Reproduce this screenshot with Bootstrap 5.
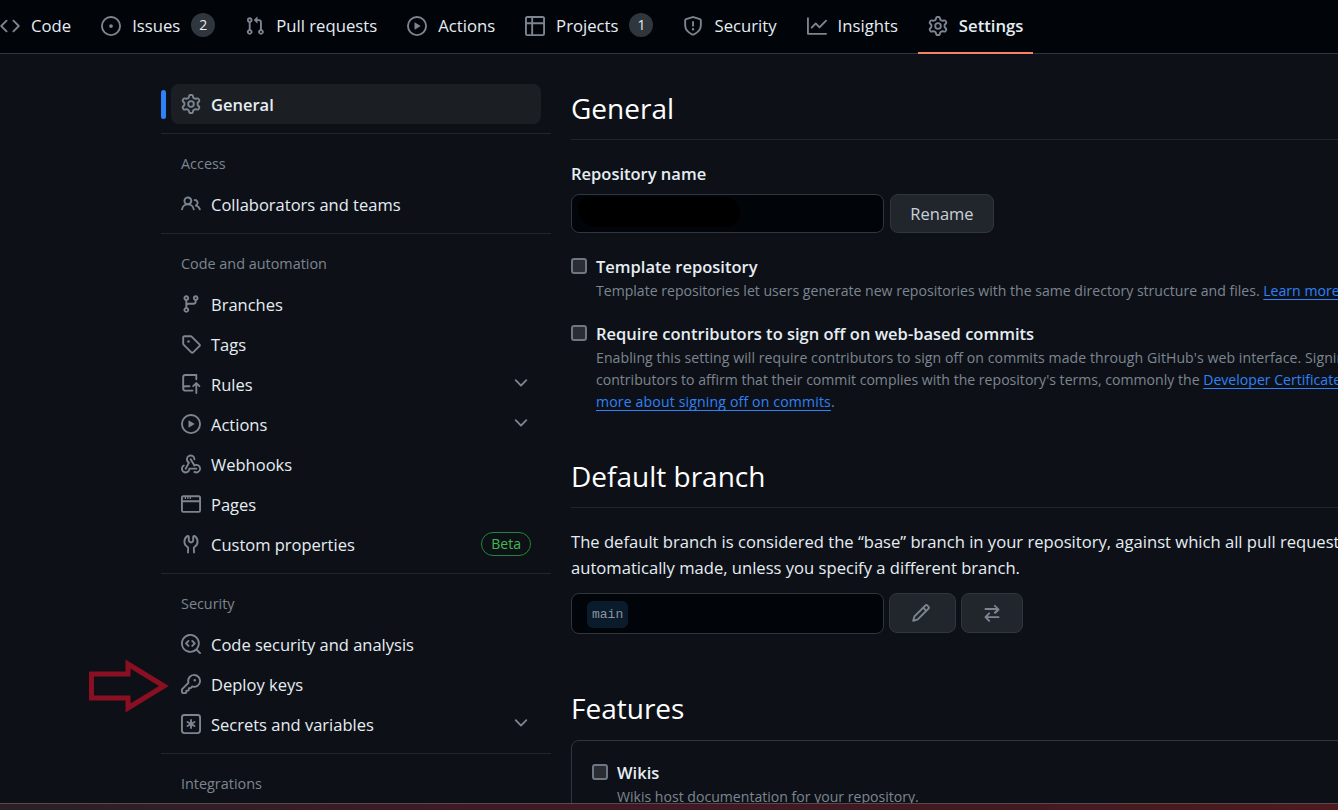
<!doctype html>
<html lang="en" data-bs-theme="dark">
<head>
<meta charset="utf-8">
<title>Settings</title>
<link rel="stylesheet" href="https://cdn.jsdelivr.net/npm/bootstrap@5.3.0/dist/css/bootstrap.min.css">
<style>
html,body{height:810px;overflow:hidden}
body{background:#0d1117;color:#e6edf3;font-family:"Open Sans","Noto Sans",sans-serif;font-size:16.5px;line-height:22px;position:relative}
svg.oct{width:20px;height:20px;fill:#7d8590;flex:none}
.topnav{height:54px;background:#010409;border-bottom:1px solid #30363d;gap:10px}
.tab{height:53px;padding:0 10px 2px;gap:11px;color:#e6edf3;position:relative;font-size:16.7px}
.tab:first-child{margin-left:-10px}
.tab.on{font-weight:600}
.tab.on::after{content:"";position:absolute;left:0;right:0;bottom:-1px;height:2px;background:#f78166}
.cnt{width:24px;height:24px;border-radius:50%;background:#30363d;font-size:14px;margin-bottom:1px}
.shell{padding-left:161px;padding-top:30px;gap:20px}
.side{width:390px;flex:none}
.sitem{height:40px;margin:0 10px;padding:0 10px;gap:10px;border-radius:8px;color:#e6edf3}
.sitem svg.oct{margin-bottom:2px}
.sitem.on{background:#1b1f24;font-weight:600;position:relative;padding-top:2px}
.sitem.on::before{content:"";position:absolute;left:-10px;top:6px;width:5px;height:29px;border-radius:4px;background:#2f81f7}
.sitem svg.chev{margin-left:auto;margin-bottom:4px}
.shead{font-size:14.4px;color:#7d8590;height:20px;line-height:20px;margin:20px 20px 11px}
.sdiv{height:1px;background:#21262d;margin:8px 0 0;opacity:1;border:0}
.sitem.on + .sdiv{margin-top:9px}
.pill{margin-left:auto;margin-bottom:2px;border:1px solid #238636;color:#3fb950;border-radius:12px;font-size:14px;height:24px;padding:0 9px}
.mainc{width:1000px;flex:none}
.sect{font-size:28px;font-weight:400;line-height:48px;margin:0;padding-bottom:7px;border-bottom:1px solid #21262d}
.flabel{font-weight:600;margin:23px 0 9px}
.inp{width:313px;height:39px;background:#010409;border:1px solid #30363d;border-radius:8px;padding:0 6px}
.blob{width:162px;height:30px;margin-top:-3px;background:#000;border-radius:15px 20px 18px 24px}
.gbtn{background:#21262d;border:1px solid #30363d;border-radius:8px;color:#c9d1d9;font-size:16.5px;padding:0;height:39px}
.gbtn:hover{background:#21262d}
.namerow{gap:6px;margin-bottom:23px}
.rename-btn{width:104px;padding-top:1px}
.ck{width:16px;height:16px;flex:none;background:#2a2d33;border:2px solid #6e7681;border-radius:3px;margin-top:2px}
.ckrow{gap:9px}
.ckt{font-weight:600;margin-bottom:2px}
.nt{font-size:14.08px;color:#7d8590;line-height:22px;white-space:nowrap}
.wide1{letter-spacing:.07px}
.wide2{letter-spacing:.15px}
.sp1{margin-bottom:21px}
a.lk{color:#2f81f7;text-decoration:underline;text-underline-offset:3px}
.default-h{margin-top:39px}
.para{line-height:26px;margin:21px 0 12px;white-space:nowrap;font-size:16.6px}
.branch-row{gap:5px;align-items:flex-start}
.inp2{height:41px;padding-left:15px}
.mono{font-family:"Liberation Mono",monospace;font-size:13px;color:#8b949e;background:#0a1b2c;border-radius:6px;padding:3px 5px;line-height:21px;margin-top:1px}
.ibtn1{width:67px;height:40px}
.ibtn1 svg.oct{margin-right:4px}
.ibtn2{width:62px;height:40px}
.feat-h{margin-top:50px;border-bottom:0;padding-bottom:0}
.fbox{border:1px solid #30363d;border-radius:8px;padding:21px 20px;margin-top:8px}
.strip{position:absolute;left:0;right:0;top:803px;height:7px;background:linear-gradient(90deg,#2a2026,#3f1a26 35%,#3f1a22 65%,#4d1a1e);border-top:1px solid #57484c}
.arrow{position:absolute;left:86px;top:658px;width:86px;height:58px;fill:none;stroke:#8a0f22;stroke-width:5}
</style>
</head>
<body>
<svg width="0" height="0" class="position-absolute"><defs>
<symbol id="i-code" viewBox="0 0 16 16"><path d="m11.28 3.22 4.25 4.25a.75.75 0 0 1 0 1.06l-4.25 4.25a.749.749 0 0 1-1.275-.326.749.749 0 0 1 .215-.734L13.94 8l-3.72-3.72a.749.749 0 0 1 .326-1.275.749.749 0 0 1 .734.215Zm-6.56 0a.751.751 0 0 1 1.042.018.751.751 0 0 1 .018 1.042L2.06 8l3.72 3.72a.749.749 0 0 1-.326 1.275.749.749 0 0 1-.734-.215L.47 8.53a.75.75 0 0 1 0-1.06Z"/></symbol>
<symbol id="i-issue" viewBox="0 0 16 16"><path d="M8 9.5a1.5 1.5 0 1 0 0-3 1.5 1.5 0 0 0 0 3Z"/><path d="M8 0a8 8 0 1 1 0 16A8 8 0 0 1 8 0ZM1.5 8a6.5 6.5 0 1 0 13 0 6.5 6.5 0 0 0-13 0Z"/></symbol>
<symbol id="i-pr" viewBox="0 0 16 16"><path d="M1.5 3.25a2.25 2.25 0 1 1 3 2.122v5.256a2.251 2.251 0 1 1-1.5 0V5.372A2.25 2.25 0 0 1 1.5 3.25Zm5.677-.177L9.573.677A.25.25 0 0 1 10 .854V2.5h1A2.5 2.5 0 0 1 13.5 5v5.628a2.251 2.251 0 1 1-1.5 0V5a1 1 0 0 0-1-1h-1v1.646a.25.25 0 0 1-.427.177L7.177 3.427a.25.25 0 0 1 0-.354ZM3.75 2.5a.75.75 0 1 0 0 1.5.75.75 0 0 0 0-1.5Zm0 9.5a.75.75 0 1 0 0 1.5.75.75 0 0 0 0-1.5Zm8.25.75a.75.75 0 1 0 1.5 0 .75.75 0 0 0-1.5 0Z"/></symbol>
<symbol id="i-play" viewBox="0 0 16 16"><path d="M8 0a8 8 0 1 1 0 16A8 8 0 0 1 8 0ZM1.5 8a6.5 6.5 0 1 0 13 0 6.5 6.5 0 0 0-13 0Zm4.879-2.773 4.264 2.559a.25.25 0 0 1 0 .428l-4.264 2.559A.25.25 0 0 1 6 10.559V5.442a.25.25 0 0 1 .379-.215Z"/></symbol>
<symbol id="i-table" viewBox="0 0 16 16"><path d="M0 1.75C0 .784.784 0 1.75 0h12.5C15.216 0 16 .784 16 1.75v12.5A1.75 1.75 0 0 1 14.25 16H1.75A1.75 1.75 0 0 1 0 14.25ZM6.5 6.5v8h7.75a.25.25 0 0 0 .25-.25V6.5Zm8-1.5V1.75a.25.25 0 0 0-.25-.25H6.5V5Zm-13 1.5v7.75c0 .138.112.25.25.25H5v-8ZM5 5V1.5H1.75a.25.25 0 0 0-.25.25V5Z"/></symbol>
<symbol id="i-shield" viewBox="0 0 16 16"><path d="M7.467.133a1.748 1.748 0 0 1 1.066 0l5.25 1.68A1.75 1.75 0 0 1 15 3.48V7c0 1.566-.32 3.182-1.303 4.682-.983 1.498-2.585 2.813-5.032 3.855a1.697 1.697 0 0 1-1.33 0c-2.447-1.042-4.049-2.357-5.032-3.855C1.32 10.182 1 8.566 1 7V3.48a1.75 1.75 0 0 1 1.217-1.667Zm.61 1.429a.25.25 0 0 0-.153 0l-5.25 1.68a.25.25 0 0 0-.174.238V7c0 1.358.275 2.666 1.057 3.86.784 1.194 2.121 2.34 4.366 3.297a.196.196 0 0 0 .154 0c2.245-.956 3.582-2.104 4.366-3.298C13.225 9.666 13.5 8.36 13.5 7V3.48a.251.251 0 0 0-.174-.237l-5.25-1.68ZM8.75 4.75v3a.75.75 0 0 1-1.5 0v-3a.75.75 0 0 1 1.5 0ZM9 10.5a1 1 0 1 1-2 0 1 1 0 0 1 2 0Z"/></symbol>
<symbol id="i-graph" viewBox="0 0 16 16"><path d="M1.5 1.75V13.5h13.75a.75.75 0 0 1 0 1.5H.75a.75.75 0 0 1-.75-.75V1.75a.75.75 0 0 1 1.5 0Zm14.28 2.53-5.25 5.25a.75.75 0 0 1-1.06 0L7 7.06 4.28 9.78a.751.751 0 0 1-1.042-.018.751.751 0 0 1-.018-1.042l3.25-3.25a.75.75 0 0 1 1.06 0L10 7.94l4.72-4.72a.751.751 0 0 1 1.042.018.751.751 0 0 1 .018 1.042Z"/></symbol>
<symbol id="i-gear" viewBox="0 0 16 16"><path d="M8 0a8.2 8.2 0 0 1 .701.031C9.444.095 9.99.645 10.16 1.29l.288 1.107c.018.066.079.158.212.224.231.114.454.243.668.386.123.082.233.09.299.071l1.103-.303c.644-.176 1.392.021 1.82.63.27.385.506.792.704 1.218.315.675.111 1.422-.364 1.891l-.814.806c-.049.048-.098.147-.088.294.016.257.016.515 0 .772-.01.147.038.246.088.294l.814.806c.475.469.679 1.216.364 1.891a7.977 7.977 0 0 1-.704 1.217c-.428.61-1.176.807-1.82.63l-1.102-.302c-.067-.019-.177-.011-.3.071a5.909 5.909 0 0 1-.668.386c-.133.066-.194.158-.211.224l-.29 1.106c-.168.646-.715 1.196-1.458 1.26a8.006 8.006 0 0 1-1.402 0c-.743-.064-1.289-.614-1.458-1.26l-.289-1.106c-.018-.066-.079-.158-.212-.224a5.738 5.738 0 0 1-.668-.386c-.123-.082-.233-.09-.299-.071l-1.103.303c-.644.176-1.392-.021-1.82-.63a8.12 8.12 0 0 1-.704-1.218c-.315-.675-.111-1.422.363-1.891l.815-.806c.05-.048.098-.147.088-.294a6.214 6.214 0 0 1 0-.772c.01-.147-.038-.246-.088-.294l-.815-.806C.635 6.045.431 5.298.746 4.623a7.92 7.92 0 0 1 .704-1.217c.428-.61 1.176-.807 1.82-.63l1.102.302c.067.019.177.011.3-.071.214-.143.437-.272.668-.386.133-.066.194-.158.211-.224l.29-1.106C6.009.645 6.556.095 7.299.03 7.53.01 7.764 0 8 0Zm-.571 1.525c-.036.003-.108.036-.137.146l-.289 1.105c-.147.561-.549.967-.998 1.189-.173.086-.34.183-.5.29-.417.278-.97.423-1.529.27l-1.103-.303c-.109-.03-.175.016-.195.045-.22.312-.412.644-.573.99-.014.031-.021.11.059.19l.815.806c.411.406.562.957.53 1.456a4.709 4.709 0 0 0 0 .582c.032.499-.119 1.05-.53 1.456l-.815.806c-.081.08-.073.159-.059.19.162.346.353.677.573.989.02.03.085.076.195.046l1.102-.303c.56-.153 1.113-.008 1.53.27.161.107.328.204.501.29.447.222.85.629.997 1.189l.289 1.105c.029.109.101.143.137.146a6.6 6.6 0 0 0 1.142 0c.036-.003.108-.036.137-.146l.289-1.105c.147-.561.549-.967.998-1.189.173-.086.34-.183.5-.29.417-.278.97-.423 1.529-.27l1.103.303c.109.029.175-.016.195-.045.22-.313.411-.644.573-.99.014-.031.021-.11-.059-.19l-.815-.806c-.411-.406-.562-.957-.53-1.456a4.709 4.709 0 0 0 0-.582c-.032-.499.119-1.05.53-1.456l.815-.806c.081-.08.073-.159.059-.19a6.464 6.464 0 0 0-.573-.989c-.02-.03-.085-.076-.195-.046l-1.102.303c-.56.153-1.113.008-1.53-.27a4.44 4.44 0 0 0-.501-.29c-.447-.222-.85-.629-.997-1.189l-.289-1.105c-.029-.11-.101-.143-.137-.146a6.6 6.6 0 0 0-1.142 0ZM11 8a3 3 0 1 1-6 0 3 3 0 0 1 6 0ZM9.5 8a1.5 1.5 0 1 0-3.001.001A1.5 1.5 0 0 0 9.5 8Z"/></symbol>
<symbol id="i-people" viewBox="0 0 16 16"><path d="M2 5.5a3.5 3.5 0 1 1 5.898 2.549 5.508 5.508 0 0 1 3.034 4.084.75.75 0 1 1-1.482.235 4 4 0 0 0-7.9 0 .75.75 0 0 1-1.482-.236A5.507 5.507 0 0 1 3.102 8.05 3.493 3.493 0 0 1 2 5.5ZM11 4a3.001 3.001 0 0 1 2.22 5.018 5.01 5.01 0 0 1 2.56 3.012.749.749 0 0 1-.885.954.752.752 0 0 1-.549-.514 3.507 3.507 0 0 0-2.522-2.372.75.75 0 0 1-.574-.73v-.352a.75.75 0 0 1 .416-.672A1.5 1.5 0 0 0 11 5.5.75.75 0 0 1 11 4Zm-5.5-.5a2 2 0 1 0-.001 3.999A2 2 0 0 0 5.5 3.5Z"/></symbol>
<symbol id="i-branch" viewBox="0 0 16 16"><path d="M9.5 3.25a2.25 2.25 0 1 1 3 2.122V6A2.5 2.5 0 0 1 10 8.5H6a1 1 0 0 0-1 1v1.128a2.251 2.251 0 1 1-1.5 0V5.372a2.25 2.25 0 1 1 1.5 0v1.836A2.493 2.493 0 0 1 6 7h4a1 1 0 0 0 1-1v-.628A2.25 2.25 0 0 1 9.5 3.25Zm-6 0a.75.75 0 1 0 1.5 0 .75.75 0 0 0-1.5 0Zm8.25-.75a.75.75 0 1 0 0 1.5.75.75 0 0 0 0-1.5ZM4.25 12a.75.75 0 1 0 0 1.5.75.75 0 0 0 0-1.5Z"/></symbol>
<symbol id="i-tag" viewBox="0 0 16 16"><path d="M1 7.775V2.75C1 1.784 1.784 1 2.75 1h5.025c.464 0 .91.184 1.238.513l6.25 6.25a1.75 1.75 0 0 1 0 2.474l-5.026 5.026a1.75 1.75 0 0 1-2.474 0l-6.25-6.25A1.752 1.752 0 0 1 1 7.775Zm1.5 0c0 .066.026.13.073.177l6.25 6.25a.25.25 0 0 0 .354 0l5.025-5.025a.25.25 0 0 0 0-.354l-6.25-6.25a.25.25 0 0 0-.177-.073H2.75a.25.25 0 0 0-.25.25ZM6 5a1 1 0 1 1 0 2 1 1 0 0 1 0-2Z"/></symbol>
<symbol id="i-push" viewBox="0 0 16 16"><path d="M1 2.5A2.5 2.5 0 0 1 3.5 0h8.75a.75.75 0 0 1 .75.75v3.5a.75.75 0 0 1-1.5 0V1.5h-8a1 1 0 0 0-1 1v6.708A2.493 2.493 0 0 1 3.5 9h3.25a.75.75 0 0 1 0 1.5H3.5a1 1 0 0 0 0 2h5.75a.75.75 0 0 1 0 1.5H3.5A2.5 2.5 0 0 1 1 11.5Zm13.23 7.79h-.001l-1.224-1.224v6.184a.75.75 0 0 1-1.5 0V9.066L10.28 10.29a.75.75 0 0 1-1.06-1.061l2.505-2.504a.75.75 0 0 1 1.06 0L15.29 9.23a.751.751 0 0 1-.018 1.042.751.751 0 0 1-1.042.018Z"/></symbol>
<symbol id="i-hook" viewBox="0 0 16 16"><path d="M5.5 4.25a2.25 2.25 0 0 1 4.5 0 .75.75 0 0 0 1.5 0 3.75 3.75 0 1 0-6.14 2.889l-2.272 4.258a.75.75 0 0 0 1.324.706L7 7.25a.75.75 0 0 0-.309-1.015A2.25 2.25 0 0 1 5.5 4.25Z"/><path d="M7.364 3.607a.75.75 0 0 1 1.03.257l2.608 4.349a3.75 3.75 0 1 1-.628 6.785.75.75 0 0 1 .752-1.299 2.25 2.25 0 1 0-.033-3.88.75.75 0 0 1-1.03-.256L7.107 4.636a.75.75 0 0 1 .257-1.03Z"/><path d="M2.9 8.776A.75.75 0 0 1 2.625 9.8 2.25 2.25 0 1 0 6 11.75a.75.75 0 0 1 .75-.751h5.5a.75.75 0 0 1 0 1.5H7.425a3.751 3.751 0 1 1-5.55-3.998.75.75 0 0 1 1.024.274Z"/></symbol>
<symbol id="i-browser" viewBox="0 0 16 16"><path d="M0 2.75C0 1.784.784 1 1.75 1h12.5c.966 0 1.75.784 1.75 1.75v10.5A1.75 1.75 0 0 1 14.25 15H1.75A1.75 1.75 0 0 1 0 13.25ZM14.5 6.5h-13v6.75c0 .138.112.25.25.25h12.5a.25.25 0 0 0 .25-.25Zm-13-1.5h13V2.75a.25.25 0 0 0-.25-.25H1.75a.25.25 0 0 0-.25.25ZM5 2.5h1V4H5Zm-2 0h1V4H3Zm4 0h1V4H7Z"/></symbol>
<symbol id="i-tools" viewBox="0 0 16 16"><path d="M5.433 2.304A4.494 4.494 0 0 0 3.5 6c0 1.598.832 3.002 2.09 3.802.518.328.929.923.902 1.64v.008l-.164 3.337a.75.75 0 1 1-1.498-.073l.163-3.33c.002-.085-.05-.216-.207-.316A5.996 5.996 0 0 1 2 6a5.994 5.994 0 0 1 2.567-4.92 1.482 1.482 0 0 1 1.673-.04c.462.296.76.827.76 1.423v2.82c0 .082.041.16.11.206l.75.51a.25.25 0 0 0 .28 0l.75-.51A.249.249 0 0 0 9 5.282V2.463c0-.596.298-1.127.76-1.423a1.482 1.482 0 0 1 1.673.04A5.994 5.994 0 0 1 14 6a5.996 5.996 0 0 1-2.786 5.068c-.157.1-.209.23-.207.315l.163 3.33a.752.752 0 0 1-1.094.714.75.75 0 0 1-.404-.64l-.164-3.345c-.027-.717.384-1.312.902-1.64A4.496 4.496 0 0 0 12.5 6a4.494 4.494 0 0 0-1.933-3.696c-.024.017-.067.067-.067.16v2.818a1.75 1.75 0 0 1-.767 1.448l-.75.51a1.75 1.75 0 0 1-1.966 0l-.75-.51A1.75 1.75 0 0 1 5.5 5.282V2.463c0-.092-.043-.142-.067-.159Z"/></symbol>
<symbol id="i-scan" viewBox="0 0 16 16"><path d="M8.47 4.97a.75.75 0 0 0 0 1.06L9.94 7.5 8.47 8.97a.75.75 0 1 0 1.06 1.06l2-2a.75.75 0 0 0 0-1.06l-2-2a.75.75 0 0 0-1.06 0ZM6.53 6.03a.75.75 0 0 0-1.06-1.06l-2 2a.75.75 0 0 0 0 1.06l2 2a.75.75 0 1 0 1.06-1.06L5.06 7.5l1.47-1.47Z"/><path d="M12.246 13.307a7.501 7.501 0 1 1 1.06-1.06l2.474 2.473a.749.749 0 0 1-.326 1.275.749.749 0 0 1-.734-.215ZM1.5 7.5a6.002 6.002 0 0 0 3.608 5.504 6.002 6.002 0 0 0 6.486-1.117.748.748 0 0 1 .292-.293A6 6 0 1 0 1.5 7.5Z"/></symbol>
<symbol id="i-key" viewBox="0 0 16 16"><path d="M10.5 0a5.499 5.499 0 1 1-1.288 10.848l-.932.932a.749.749 0 0 1-.53.22H7v.75a.749.749 0 0 1-.22.53l-.5.5a.749.749 0 0 1-.53.22H5v.75a.749.749 0 0 1-.22.53l-.5.5a.749.749 0 0 1-.53.22h-2A1.75 1.75 0 0 1 0 14.25v-2c0-.199.079-.389.22-.53l4.932-4.932A5.5 5.5 0 0 1 10.5 0Zm-4 5.5c-.001.431.069.86.205 1.269a.75.75 0 0 1-.181.768L1.5 12.56v1.69c0 .138.112.25.25.25h1.69l.06-.06v-1.19a.75.75 0 0 1 .75-.75h1.19l.06-.06v-1.19a.75.75 0 0 1 .75-.75h1.19l1.023-1.025a.75.75 0 0 1 .768-.18A4 4 0 1 0 6.5 5.5ZM11 6a1 1 0 1 1 0-2 1 1 0 0 1 0 2Z"/></symbol>
<symbol id="i-ast" viewBox="0 0 16 16"><path d="M0 2.75A2.75 2.75 0 0 1 2.75 0h10.5A2.75 2.75 0 0 1 16 2.75v10.5A2.75 2.75 0 0 1 13.25 16H2.75A2.75 2.75 0 0 1 0 13.25ZM2.75 1.5c-.69 0-1.25.56-1.25 1.25v10.5c0 .69.56 1.25 1.25 1.25h10.5c.69 0 1.25-.56 1.25-1.25V2.75c0-.69-.56-1.25-1.25-1.25Z"/><path d="M8 4a.75.75 0 0 1 .75.75V6.7l1.69-.975a.75.75 0 0 1 .75 1.3L9.5 8l1.69.976a.75.75 0 0 1-.75 1.298L8.75 9.3v1.951a.75.75 0 0 1-1.5 0V9.299l-1.69.976a.75.75 0 0 1-.75-1.3L6.5 8l-1.69-.975a.75.75 0 0 1 .75-1.3l1.69.976V4.75A.75.75 0 0 1 8 4Z"/></symbol>
<symbol id="i-chev" viewBox="0 0 16 16"><path d="M12.78 5.22a.749.749 0 0 1 0 1.06l-4.25 4.25a.749.749 0 0 1-1.06 0L3.22 6.28a.749.749 0 1 1 1.06-1.06L8 8.939l3.72-3.719a.749.749 0 0 1 1.06 0Z"/></symbol>
<symbol id="i-pencil" viewBox="0 0 16 16"><path d="M11.013 1.427a1.75 1.75 0 0 1 2.474 0l1.086 1.086a1.75 1.75 0 0 1 0 2.474l-8.61 8.61c-.21.21-.47.364-.756.445l-3.251.93a.75.75 0 0 1-.927-.928l.929-3.25c.081-.286.235-.547.445-.758l8.61-8.61Zm.176 4.823L9.75 4.81l-6.286 6.287a.253.253 0 0 0-.064.108l-.558 1.953 1.953-.558a.253.253 0 0 0 .108-.064Zm1.238-3.763a.25.25 0 0 0-.354 0L10.811 3.75l1.439 1.44 1.263-1.263a.25.25 0 0 0 0-.354Z"/></symbol>
<symbol id="i-switch" viewBox="0 0 16 16"><path d="M5.22 14.78a.75.75 0 0 0 1.06-1.06L4.56 12h8.69a.75.75 0 0 0 0-1.5H4.56l1.72-1.72a.75.75 0 0 0-1.06-1.06l-3 3a.75.75 0 0 0 0 1.06l3 3Zm5.56-6.5a.75.75 0 1 1-1.06-1.06l1.72-1.72H2.75a.75.75 0 0 1 0-1.5h8.69L9.72 2.78a.75.75 0 0 1 1.06-1.06l3 3a.75.75 0 0 1 0 1.06l-3 3Z"/></symbol>
</defs></svg>

<nav class="topnav d-flex">
  <div class="tab d-flex align-items-center"><svg class="oct"><use href="#i-code"/></svg><span>Code</span></div>
  <div class="tab d-flex align-items-center"><svg class="oct"><use href="#i-issue"/></svg><span>Issues</span><span class="cnt d-flex align-items-center justify-content-center">2</span></div>
  <div class="tab d-flex align-items-center"><svg class="oct"><use href="#i-pr"/></svg><span>Pull requests</span></div>
  <div class="tab d-flex align-items-center"><svg class="oct"><use href="#i-play"/></svg><span>Actions</span></div>
  <div class="tab d-flex align-items-center"><svg class="oct"><use href="#i-table"/></svg><span>Projects</span><span class="cnt d-flex align-items-center justify-content-center">1</span></div>
  <div class="tab d-flex align-items-center"><svg class="oct"><use href="#i-shield"/></svg><span>Security</span></div>
  <div class="tab d-flex align-items-center"><svg class="oct"><use href="#i-graph"/></svg><span>Insights</span></div>
  <div class="tab on d-flex align-items-center"><svg class="oct"><use href="#i-gear"/></svg><span>Settings</span></div>
</nav>

<div class="shell d-flex">
  <aside class="side">
    <div class="sitem on d-flex align-items-center"><svg class="oct"><use href="#i-gear"/></svg><span>General</span></div>
    <hr class="sdiv">
    <div class="shead">Access</div>
    <div class="sitem d-flex align-items-center"><svg class="oct"><use href="#i-people"/></svg><span>Collaborators and teams</span></div>
    <hr class="sdiv">
    <div class="shead">Code and automation</div>
    <div class="sitem d-flex align-items-center"><svg class="oct"><use href="#i-branch"/></svg><span>Branches</span></div>
    <div class="sitem d-flex align-items-center"><svg class="oct"><use href="#i-tag"/></svg><span>Tags</span></div>
    <div class="sitem d-flex align-items-center"><svg class="oct"><use href="#i-push"/></svg><span>Rules</span><svg class="oct chev"><use href="#i-chev"/></svg></div>
    <div class="sitem d-flex align-items-center"><svg class="oct"><use href="#i-play"/></svg><span>Actions</span><svg class="oct chev"><use href="#i-chev"/></svg></div>
    <div class="sitem d-flex align-items-center"><svg class="oct"><use href="#i-hook"/></svg><span>Webhooks</span></div>
    <div class="sitem d-flex align-items-center"><svg class="oct"><use href="#i-browser"/></svg><span>Pages</span></div>
    <div class="sitem d-flex align-items-center"><svg class="oct"><use href="#i-tools"/></svg><span>Custom properties</span><span class="pill d-flex align-items-center">Beta</span></div>
    <hr class="sdiv">
    <div class="shead">Security</div>
    <div class="sitem d-flex align-items-center"><svg class="oct"><use href="#i-scan"/></svg><span>Code security and analysis</span></div>
    <div class="sitem d-flex align-items-center"><svg class="oct"><use href="#i-key"/></svg><span>Deploy keys</span></div>
    <div class="sitem d-flex align-items-center"><svg class="oct"><use href="#i-ast"/></svg><span>Secrets and variables</span><svg class="oct chev"><use href="#i-chev"/></svg></div>
    <hr class="sdiv">
    <div class="shead">Integrations</div>
  </aside>
  <main class="mainc">
    <h2 class="sect">General</h2>
    <div class="flabel">Repository name</div>
    <div class="d-flex namerow">
      <div class="inp d-flex align-items-center"><div class="blob"></div></div>
      <button class="btn gbtn rename-btn">Rename</button>
    </div>
    <div class="d-flex ckrow sp1">
      <div class="ck"></div>
      <div><div class="ckt">Template repository</div>
      <div class="nt">Template repositories let users generate new repositories with the same directory structure and files. <a class="lk" href="#">Learn more about template repositories</a>.</div></div>
    </div>
    <div class="d-flex ckrow">
      <div class="ck"></div>
      <div><div class="ckt">Require contributors to sign off on web-based commits</div>
      <div class="nt"><span class="wide1">Enabling this setting will require contributors to sign off on commits made through GitHub's web interface. Signing off is a way for</span><br>contributors to affirm that their commit complies with the repository's terms, commonly the <a class="lk" href="#">Developer Certificate of Origin</a>. Learn<br><a class="lk wide2" href="#">more about signing off on commits</a>.</div></div>
    </div>
    <h2 class="sect default-h">Default branch</h2>
    <p class="para">The default branch is considered the “base” branch in your repository, against which all pull requests and code commits are<br>automatically made, unless you specify a different branch.</p>
    <div class="d-flex branch-row">
      <div class="inp inp2 d-flex align-items-center"><code class="mono">main</code></div>
      <button class="btn gbtn ibtn1 d-flex align-items-center justify-content-center"><svg class="oct"><use href="#i-pencil"/></svg></button>
      <button class="btn gbtn ibtn2 d-flex align-items-center justify-content-center"><svg class="oct"><use href="#i-switch"/></svg></button>
    </div>
    <h2 class="sect feat-h">Features</h2>
    <div class="fbox">
      <div class="d-flex ckrow">
        <div class="ck"></div>
        <div><div class="ckt">Wikis</div><div class="nt">Wikis host documentation for your repository.</div></div>
      </div>
    </div>
  </main>
</div>
<svg class="arrow" viewBox="0 0 86 58"><polygon points="5.5,16 42,16 42,6 78,28 42,50 42,40 5.5,40"/></svg>
<div class="strip"></div>
</body>
</html>
